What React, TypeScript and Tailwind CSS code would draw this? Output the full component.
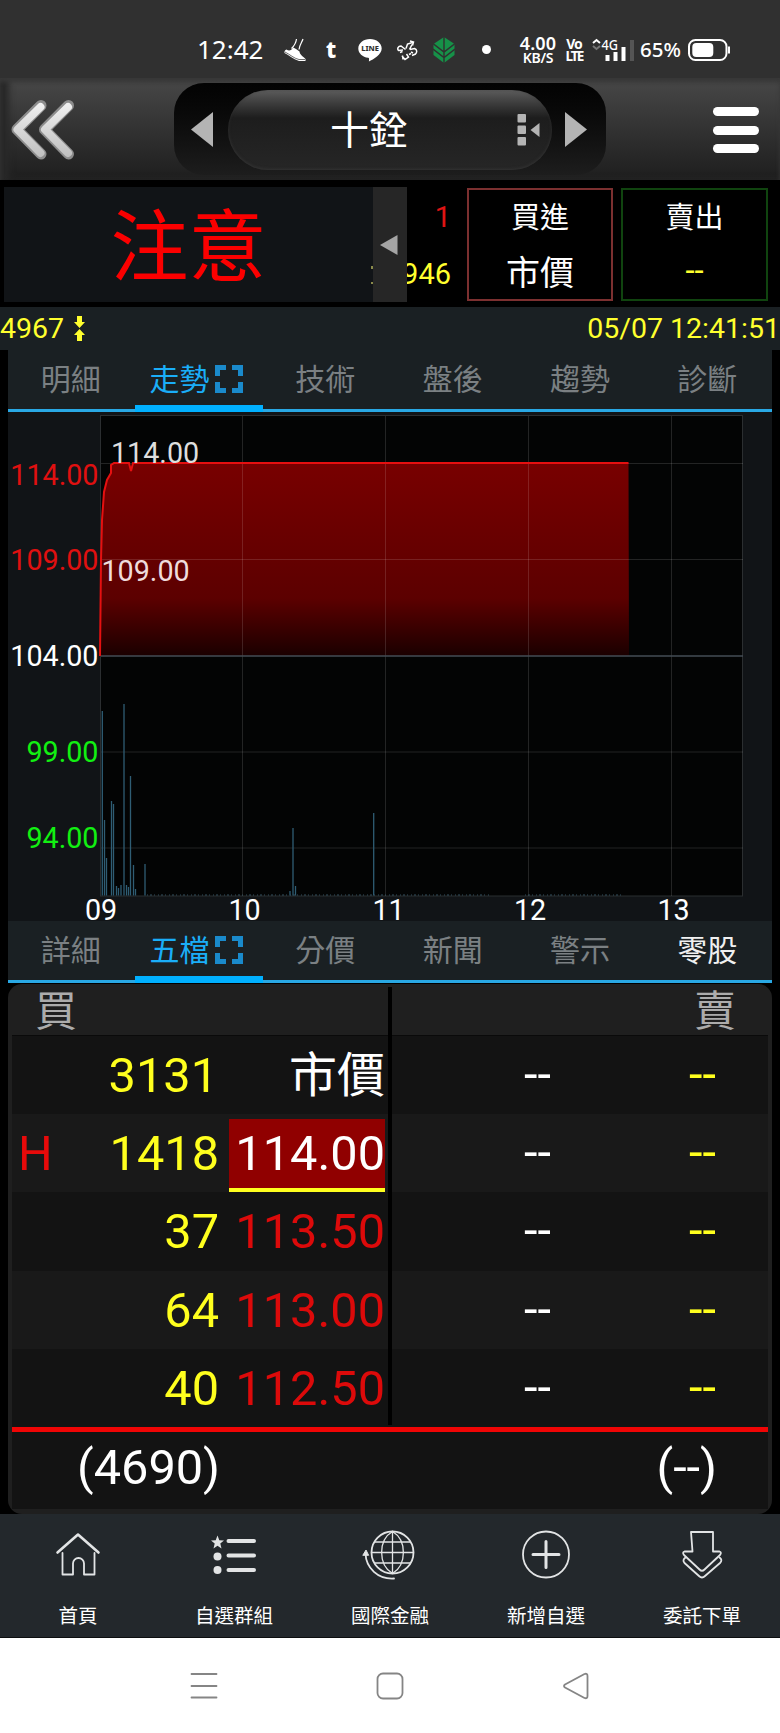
import React, { useState } from 'react';
import clsx from 'clsx';

interface Level {
  flag?: string;
  qty: string;
  price: string;
  highlight?: boolean;
  market?: boolean;
}

interface NavItem {
  label: string;
  icon: React.ReactNode;
}

const chartTabs = ['明細', '走勢', '技術', '盤後', '趨勢', '診斷'];
const detailTabs = ['詳細', '五檔', '分價', '新聞', '警示', '零股'];

const levels: Level[] = [
  { qty: '3131', price: '市價', market: true },
  { flag: 'H', qty: '1418', price: '114.00', highlight: true },
  { qty: '37', price: '113.50' },
  { qty: '64', price: '113.00' },
  { qty: '40', price: '112.50' },
];

const priceLabels = [
  { text: '114.00', y: 484.5, fill: '#e01010' },
  { text: '109.00', y: 569.5, fill: '#e01010' },
  { text: '104.00', y: 665.5, fill: '#ffffff' },
  { text: '99.00', y: 761.5, fill: '#12f012' },
  { text: '94.00', y: 847.5, fill: '#12f012' },
];

const hourLabels = [
  { text: '09', x: 101 },
  { text: '10', x: 244.5 },
  { text: '11', x: 388.5 },
  { text: '12', x: 530 },
  { text: '13', x: 673.5 },
];

// [x, top] of every visible volume bar
const volumes = [
  [102.3, 711], [104.5, 820], [106.5, 858], [111.5, 801], [113.5, 804],
  [116.5, 886], [118.5, 888], [121, 885], [124, 704], [126.5, 885],
  [128.5, 887], [130.5, 776], [133.5, 865], [135.5, 889], [145, 864],
  [290, 891], [293, 828], [295.5, 886], [373.7, 813],
];

const StatusBar = () => (
  <div className="h-[78px] bg-[#303030] flex items-start text-white font-['Noto_Sans','Noto_Sans_CJK_TC',sans-serif]">
    <span className="ml-[197px] mt-[32px] w-[67px] text-[26px] leading-[34px]">12:42</span>
    <svg className="ml-5 mt-[38px]" width="22" height="24" viewBox="0 0 22 24" fill="none">
      <path d="M12.500 1C12 5 10 8 7.500 10.500M19 1C18 4 15.500 7 15 11.500" stroke="#fff" strokeWidth="1.200" />
      <path d="M2.500 11.500C5 13.500 7.500 12.500 9 9.500 11 10 14 12.500 15.500 13.500 16 17.500 20 19 21.500 21V23H15C9 21 4.500 17 .5 15 .3 13 1 12 2.500 11.500Z" fill="#fff" />
      <path d="M1 14C6 16.500 10 20.500 15 21.500H21" stroke="#303030" strokeWidth=".7" />
    </svg>
    <span className="ml-[20px] mt-[34px] w-[13px] text-[23px] leading-[30px] font-extrabold">t</span>
    <svg className="ml-[19px] mt-[38px]" width="24" height="24" viewBox="0 0 24 24">
      <path d="M12 1C5.500 1 .3 5.200.3 10.500c0 4.800 4.200 8.600 9.900 9.300 1 .2 1 .8.700 3.700 4.500-2.100 12.800-7 12.800-13C23.700 5.200 18.500 1 12 1Z" fill="#fff" />
      <text x="12" y="13.300" textAnchor="middle" fontSize="7.500" fontWeight="800" fill="#303030">LINE</text>
    </svg>
    <svg className="ml-[15px] mt-[40px]" width="21" height="21" viewBox="0 0 21 21" fill="none" stroke="#fff" strokeWidth="1.500">
      <path d="M9 8.500 10.500 4 15.500 2.500M13 1l3.500 1-1 3.500M12.500 9.500l2.500-5M8.500 9.500 4 6C1 6 0 9 1.500 10.500L6 10M3 12.500l2.500-1M13 9.500l4.500-1c3 1 2.500 4 1 5.500l-3.500 1.500M14 12l2 1M5 16l3 3.500 3.500-2.500-2-3M6 19.500 5.500 15.500M12 14.500l2-1" />
    </svg>
    <svg className="ml-[15px] mt-[37px]" width="22" height="26" viewBox="0 0 22 26">
      <path d="M11 0 21.500 7V18L11 26 .5 18V7Z" fill="#169148" />
      <path d="M11 0V26M0 6.500 11 15 22 6.500M0 12 11 20.500 22 12" fill="none" stroke="#303030" strokeWidth="1.400" />
    </svg>
    <span className="ml-[27px] mt-[45px] size-[9px] rounded-full bg-white" />
    <span className="ml-[27px] mt-[36px] w-[40px] flex flex-col items-center font-semibold">
      <span className="text-[18px] leading-[15px] tracking-[0.2px]">4.00</span>
      <span className="text-[14px] leading-[14px] tracking-[-0.3px]">KB/S</span>
    </span>
    <span className="ml-[7px] mt-[37px] w-[18px] flex flex-col items-center font-bold">
      <span className="text-[14px] leading-[13px] tracking-[-1px]">Vo</span>
      <span className="text-[13.500px] leading-[13px] tracking-[-1.800px]">LTE</span>
    </span>
    <svg className="ml-[9px] mt-[37px]" width="44" height="26" viewBox="0 0 44 26">
      <path d="M1 6 4.500 3 8 6" fill="none" stroke="#fff" strokeWidth="2" />
      <path d="M1 9 4.500 12 8 9" fill="none" stroke="#777" strokeWidth="2" />
      <text x="9.500" y="12.500" fontSize="14.500" fontWeight="500" fill="#fff" textLength="16.500" lengthAdjust="spacingAndGlyphs">4G</text>
      <path d="M15.500 24v-6M23.500 24v-9M31.500 24V10" stroke="#fff" strokeWidth="4" />
      <path d="M40 24V3" stroke="#555" strokeWidth="4" />
    </svg>
    <span className="ml-[4px] mt-[36px] w-[42px] text-[20.500px] leading-[26px] font-medium">65%</span>
    <svg className="ml-[6px] mt-[39px]" width="43" height="22" viewBox="0 0 43 22">
      <rect x="1" y="1" width="37.500" height="20" rx="6.500" fill="none" stroke="#fff" strokeWidth="2" />
      <rect x="4.300" y="4" width="21" height="14" rx="4" fill="#fff" />
      <path d="M41 7.500v7" stroke="#fff" strokeWidth="2" />
    </svg>
  </div>
);

const Header = () => (
  <div className="h-[104px] bg-linear-to-b from-[#484848] to-[#1e1e1e] border-b-2 border-black flex items-start shadow-[inset_0_4px_4px_#383838,inset_9px_0_6px_#282828]">
    <button className="ml-[11px] mt-[22px]">
      <svg width="64" height="60" viewBox="0 0 64 60" fill="none" strokeLinecap="round" strokeLinejoin="round">
        <defs>
          <linearGradient id="silver" x1="0" y1="0" x2="0" y2="60" gradientUnits="userSpaceOnUse">
            <stop offset="0" stopColor="#f4f4f4" />
            <stop offset="1" stopColor="#bcbcbc" />
          </linearGradient>
        </defs>
        <path d="M30 5.500 6 29.500 30 54M57.500 5.500 33.500 29.500 57.500 54" stroke="#8d8d8d" strokeWidth="11" />
        <path d="M29.500 7 6.500 29.500 29.500 53M57 7 34 29.500 57 53" stroke="url(#silver)" strokeWidth="8" />
      </svg>
    </button>
    <div className="ml-[99px] mt-[5px] w-[432px] h-[92px] rounded-[30px] bg-linear-to-b from-[#030303] to-[#1d1d1d] flex items-start">
      <svg className="ml-[17px] mt-[29px]" width="22" height="35" viewBox="0 0 22 35">
        <path d="M22 0V35L0 17.500Z" fill="#b4b4b4" />
      </svg>
      <div className="ml-[15px] mt-[7px] w-[324px] h-[80px] rounded-[40px] bg-linear-to-b from-[#5c5c5c] via-[#1d1d1d] via-35% to-[#262626] shadow-[inset_0_-1px_3px_#333333] flex items-center">
        <span className="ml-[101px] w-[80px] text-center text-white text-[39px] leading-[50px] pt-[2px]">十銓</span>
        <svg className="ml-[108px] -mt-px" width="23" height="32" viewBox="0 0 23 32" fill="#b4b4b4">
          <rect x=".5" y="0" width="8.500" height="8.500" rx="1" />
          <rect x=".5" y="11.500" width="8.500" height="8.500" rx="1" />
          <rect x=".5" y="23" width="8.500" height="8.500" rx="1" />
          <path d="M22.500 9V23L13.500 16Z" />
        </svg>
      </div>
      <svg className="ml-[13px] mt-[29px]" width="22" height="35" viewBox="0 0 22 35">
        <path d="M0 0V35L22 17.500Z" fill="#b4b4b4" />
      </svg>
    </div>
    <button className="ml-[107px] mt-[29px] flex flex-col gap-[9.500px]">
      <span className="w-[46px] h-[9px] rounded-full bg-white" />
      <span className="w-[46px] h-[9px] rounded-full bg-white" />
      <span className="w-[46px] h-[9px] rounded-full bg-white" />
    </button>
  </div>
);

const QuoteStrip = () => (
  <div className="h-[125px] bg-black flex items-start pt-[5px] pl-1">
    <div className="relative w-[369px] h-[115px] bg-[#111417] flex items-center justify-center text-[#fb0000] text-[78px] leading-[100px] pt-[9px]">
      注意
      <span className="absolute right-0 top-[79px] w-[2px] h-[3px] bg-[#8a8a4a]" />
      <span className="absolute right-0 top-[95px] w-[2px] h-[2px] bg-[#8a8a4a]" />
    </div>
    <div className="w-[34px] h-[115px] bg-[#262626] flex items-center pl-[7px]">
      <svg width="18" height="20" viewBox="0 0 18 20">
        <path d="M17.500 0V20L0 10Z" fill="#a5a5a5" />
      </svg>
    </div>
    <div className="w-[45px] h-[115px] overflow-hidden flex flex-col items-end pr-px text-[29px] leading-[34px]">
      <span className="mt-[13px] text-[#e01414]">1</span>
      <span className="mt-[23px] text-[#ffff2e]">946</span>
    </div>
    <div className="ml-[15px] mt-px w-[146px] h-[113px] border-2 border-[#7c3030] text-white flex flex-col items-center">
      <span className="mt-[8px] text-[29px] leading-[40px]">買進</span>
      <span className="mt-[13px] text-[34px] leading-[44px]">市價</span>
    </div>
    <div className="ml-[8px] mt-px w-[147px] h-[113px] border-2 border-[#10440f] text-white flex flex-col items-center">
      <span className="mt-[8px] text-[29px] leading-[40px]">賣出</span>
      <span className="mt-[11px] text-[33px] leading-[44px] text-[#ffff2e]">--</span>
    </div>
  </div>
);

const InfoRow = () => (
  <div className="h-[43px] bg-[#1a2023] flex items-center text-[#ffff2e] text-[28.500px] leading-[40px]">
    <span>4967</span>
    <svg className="ml-[10px]" width="11" height="25" viewBox="0 0 11 25" fill="#ffff2e">
      <path d="M3 0h5v6h3L5.500 12 0 6h3zM3 25h5v-6h3L5.500 13 0 19h3z" />
    </svg>
    <span className="ml-auto">05/07 12:41:51</span>
  </div>
);

interface TabsProps {
  tabs: string[];
  active: string;
  enabled?: string;
  onChange: (tab: string) => void;
}

const Tabs: React.FC<TabsProps> = ({ tabs, active, enabled, onChange }) => (
  <div className="h-[62px] mx-2 bg-[#1a2023] border-b-[3px] border-[#29a8e4] grid grid-cols-6">
    {tabs.map((tab) => (
      <button
        key={tab}
        onClick={() => onChange(tab)}
        className={clsx(
          'h-[62px] flex items-center justify-center gap-[6px] text-[30px] leading-[40px]',
          tab === active && 'text-[#1aaef8] border-b-[7px] border-[#00b0ff] pt-[5px] pr-[5px]',
          tab !== active && 'pb-[2px] pr-[2px]',
          tab !== active && (tab === enabled ? 'text-[#f0f0f0]' : 'text-[#7b8083]')
        )}
      >
        {tab}
        {tab === active && (
          <svg className="-mt-[2px]" width="28" height="28" viewBox="0 0 28 28" fill="none" stroke="#1a8acb" strokeWidth="5">
            <path d="M2.500 11V2.500H11M17 2.500h8.500V11M25.500 17v8.500H17M11 25.500H2.500V17" />
          </svg>
        )}
      </button>
    ))}
  </div>
);

const TrendChart = () => (
  <svg className="block mx-2 bg-[#111417]" width="764" height="509" viewBox="8 412 764 509" fontSize="28.700">
    <defs>
      <linearGradient id="rise" x1="0" y1="0" x2="0" y2="1">
        <stop offset="0" stopColor="#780000" />
        <stop offset="0.7" stopColor="#5c0000" />
        <stop offset="1" stopColor="#1a0000" />
      </linearGradient>
    </defs>
    <rect x="100.500" y="415.500" width="642" height="480.500" fill="#030404" stroke="#2b2e30" />
    <path
      d="M100 656 101 560 102 520 104 492 107 480 111 473V465L114 463H129L131 471 133 463H628.500L629 656Z"
      fill="url(#rise)"
    />
    <g stroke="#ffffff" strokeOpacity="0.130">
      <path d="M242.500 416V896M385.500 416V896M528.500 416V896M671.500 416V896" />
      <path d="M101 463.500H743M101 559.500H743M101 752H743M101 848H743" />
    </g>
    <path d="M101 656H743" stroke="#444d55" strokeWidth="1.500" />
    <path
      d="M100 656 101 560 102 520 104 492 107 480 111 473V465L114 463H129L131 471 133 463H628.500"
      fill="none"
      stroke="#e51010"
      strokeWidth="2"
    />
    <g stroke="#2f5d74" strokeWidth="1.300">
      {volumes.map(([x, top]) => (
        <path key={x} d={`M${x} ${top}V895.500`} />
      ))}
    </g>
    <path d="M147 895H490M525 895H623" stroke="#35505e" strokeDasharray="1 2 2 2 1 3" />
    {priceLabels.map((label) => (
      <text key={label.text} x="98.500" y={label.y} textAnchor="end" fill={label.fill}>
        {label.text}
      </text>
    ))}
    <text x="111" y="463" fill="#dedede">114.00</text>
    <text x="101.500" y="581" fill="#efdcdc">109.00</text>
    {hourLabels.map((label) => (
      <text key={label.text} x={label.x} y="919.500" textAnchor="middle" fill="#ffffff">
        {label.text}
      </text>
    ))}
  </svg>
);

const OrderBook = () => (
  <div className="mx-2 mt-px h-[530px] rounded-[14px] bg-[#1f1f1f] px-1 pb-1 text-[48.700px]">
    <div className="relative">
      <div className="h-[52px] border-b border-[#0a0a0a] flex items-center justify-between pt-[5px] pl-[23px] pr-[32px] text-[42px] leading-[46px] text-[#acacac]">
        <span>買</span>
        <span>賣</span>
      </div>
      {levels.map((level, i) => (
        <div
          key={level.price}
          className={clsx('h-[78.200px] flex leading-[78px]', i % 2 === 0 ? 'bg-[#131313]' : 'bg-[#191919]')}
        >
          <span className="w-[60px] pl-[6px] pt-px text-[#e80a0a]">{level.flag}</span>
          <span className={clsx('w-[147px] pt-px text-right text-[#ffff1e]', level.market && 'pr-px')}>{level.qty}</span>
          <span
            className={clsx(
              'ml-[10px] w-[156px] text-right',
              level.highlight && 'mt-[5px] h-[73px] bg-[#900000] border-b-4 border-[#ffff1e] leading-[70px] text-white',
              !level.highlight && 'pt-px',
              level.market && 'text-white text-[48px]',
              !level.highlight && !level.market && 'text-[#dc0a0a]'
            )}
          >
            {level.price}
          </span>
          <span className="w-[166px] text-right text-white">--</span>
          <span className="w-[165px] text-right text-[#ffff1e]">--</span>
        </div>
      ))}
      {/* divider between the two sides */}
      <div className="absolute left-[376px] top-[3px] bottom-[2px] w-1 bg-black" />
    </div>
    <div className="h-[82px] bg-[#131313] border-t-[5px] border-[#f00505] flex justify-between pl-[65px] pr-[51px] leading-[72px] text-white">
      <span>(4690)</span>
      <span>(--)</span>
    </div>
  </div>
);

const navItems: NavItem[] = [
  {
    label: '首頁',
    icon: (
      <>
        <path d="M3.500 21.500 24 3.500 44.500 21.500" strokeWidth="2.600" />
        <path d="M8.500 22V43.500H19V32.500a5.500 5.500 0 0 1 11 0V43.500H40.500V22" />
      </>
    ),
  },
  {
    label: '自選群組',
    icon: (
      <>
        <path d="M7.500 4.500 9.300 9.200 14 9.500 10.300 12.500 11.500 17.500 7.500 14.700 3.500 17.500 4.700 12.500 1 9.500 5.700 9.200Z" fill="#e2e4e5" stroke="none" />
        <circle cx="7.500" cy="25.500" r="4" fill="#e2e4e5" stroke="none" />
        <circle cx="7.500" cy="39" r="4" fill="#e2e4e5" stroke="none" />
        <path d="M18.500 10H44M18.500 24.500H44M18.500 39H44" strokeWidth="4" />
      </>
    ),
  },
  {
    label: '國際金融',
    icon: (
      <>
        <circle cx="26.500" cy="21.500" r="21" />
        <path d="M26.500.5V42.500M5.500 21.500h42M9 11h35M9 32h35M26.500.5C12 9 12 34 26.500 42.500M26.500.5C41 9 41 34 26.500 42.500" strokeWidth="1.300" />
        <path d="M-.5 22.500C0 37 12 48.500 28 47.500" />
        <path d="M-3 24 0 19 2.500 24Z" fill="#e2e4e5" strokeWidth="1" />
      </>
    ),
  },
  {
    label: '新增自選',
    icon: (
      <>
        <circle cx="24" cy="23.500" r="23" />
        <path d="M24 10.500V36.500M11 23.500H37" strokeWidth="3" />
      </>
    ),
  },
  {
    label: '委託下單',
    icon: (
      <>
        <path d="M13 1H35V20.500H41.500Q44 21.500 42 24L26.500 38.500Q24 41 21.500 38.500L6 24Q4 21.500 6.500 20.500H14.500L13 1Z" />
        <path d="M7.500 26.500Q4 29 6.500 32L21 45Q24 48 27 45L42 32Q45 29 41.500 26.500" />
      </>
    ),
  },
];

const BottomNav = () => (
  <nav className="h-[124px] bg-[#23282c] border-b border-[#0c0e0f] grid grid-cols-5">
    {navItems.map((item) => (
      <button key={item.label} className="flex flex-col items-center justify-start pt-[17px]">
        <svg
          className="overflow-visible"
          width="48"
          height="48"
          viewBox="0 0 48 48"
          fill="none"
          stroke="#e2e4e5"
          strokeWidth="1.800"
          strokeLinecap="round"
          strokeLinejoin="round"
        >
          {item.icon}
        </svg>
        <span className="mt-[24px] text-[19.500px] leading-[28px] text-white">{item.label}</span>
      </button>
    ))}
  </nav>
);

const SystemNav = () => (
  <div className="h-[95px] bg-white flex items-center justify-between px-[190px]">
    <svg width="28" height="28" viewBox="0 0 28 28" stroke="#858585" strokeWidth="1.800" strokeLinecap="round">
      <path d="M1.500 2H26.500M1.500 14H26.500M1.500 25.500H26.500" />
    </svg>
    <svg width="28" height="28" viewBox="0 0 28 28" fill="none" stroke="#858585" strokeWidth="1.800">
      <rect x="1.500" y="1.500" width="25" height="25" rx="5.500" />
    </svg>
    <svg width="28" height="28" viewBox="0 0 28 28" fill="none" stroke="#858585" strokeWidth="1.800" strokeLinejoin="round">
      <path d="M3 12.500 22.500 2Q25.500 1 25.500 4V24Q25.500 27 22.500 26L3 15.500Q1 14 3 12.500Z" />
    </svg>
  </div>
);

export default function App() {
  const [chartTab, setChartTab] = useState('走勢');
  const [detailTab, setDetailTab] = useState('五檔');

  return (
    <div className="w-[780px] h-[1733px] overflow-hidden bg-black font-['Roboto','Noto_Sans_CJK_TC',sans-serif]">
      <StatusBar />
      <Header />
      <QuoteStrip />
      <InfoRow />
      <Tabs tabs={chartTabs} active={chartTab} onChange={setChartTab} />
      <TrendChart />
      <Tabs tabs={detailTabs} active={detailTab} enabled="零股" onChange={setDetailTab} />
      <OrderBook />
      <BottomNav />
      <SystemNav />
    </div>
  );
}
